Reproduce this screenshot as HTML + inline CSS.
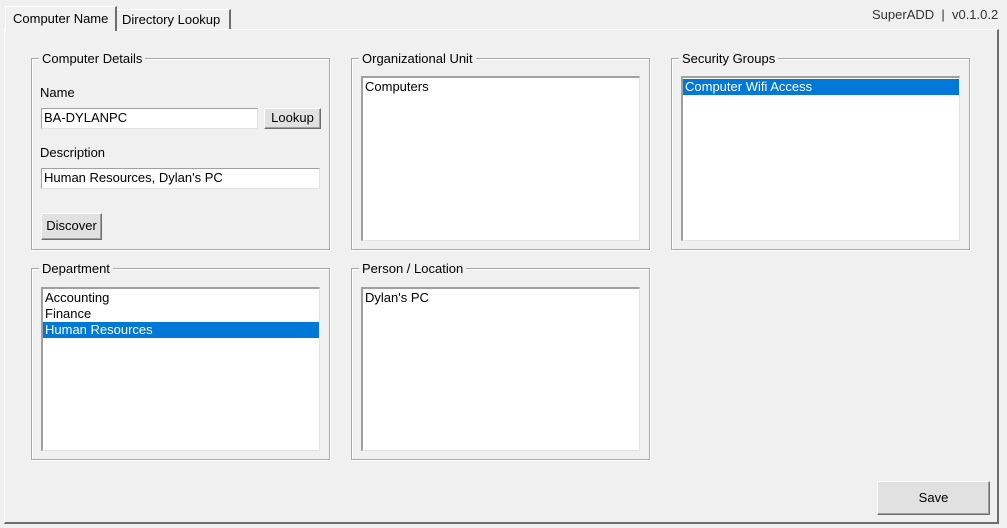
<!DOCTYPE html>
<html><head><style>
body{margin:0;width:1007px;height:528px;background:#f0f0f0;font-family:"Liberation Sans",sans-serif;font-size:13px;color:#000;position:relative;overflow:hidden}
.a{position:absolute;box-sizing:border-box}
.grp{border:1px solid #a8a8a8;box-shadow:inset 1px 1px 0 #fff,1px 1px 0 #fff}
.lg{position:absolute;top:-8px;left:7px;background:#f0f0f0;padding:0 3px;white-space:nowrap}
.list{background:#fff;border-top:2px solid #a0a0a0;border-left:2px solid #a0a0a0;border-right:1px solid #e3e3e3;border-bottom:1px solid #e3e3e3}
.it{height:16px;line-height:16px;padding-left:2px;white-space:nowrap}
.sel{background:#0078d7;color:#fff}
.tb{background:#fff;border:1px solid #a0a0a0;border-right-color:#e3e3e3;border-bottom-color:#e3e3e3;line-height:17px;padding-left:2px}
.btn{background:#e1e1e1;border:1px solid #fff;border-right:1px solid #6d6d6d;border-bottom:1px solid #6d6d6d;box-shadow:inset -1px -1px 0 #a0a0a0;text-align:center}
</style></head><body>
<div class="a" style="left:4px;top:29px;width:995px;height:495px;border-top:1px solid #fff;border-left:1px solid #fff;border-right:2px solid #6d6d6d;border-bottom:2px solid #6d6d6d"></div>
<div class="a" style="left:5px;top:6px;width:112px;height:25px;background:#f0f0f0;border-top:1px solid #fff;border-left:1px solid #fff;border-right:2px solid #6d6d6d;padding:4px 0 0 7px">Computer Name</div>
<div class="a" style="left:117px;top:9px;width:114px;height:20px;border-top:1px solid #fff;border-right:2px solid #6d6d6d;padding:2px 0 0 5px">Directory Lookup</div>
<div class="a" style="left:872px;top:7px;color:#333">SuperADD&nbsp; |&nbsp; v0.1.0.2</div>

<div class="a grp" style="left:31px;top:58px;width:299px;height:192px"><span class="lg">Computer Details</span></div>
<div class="a" style="left:40px;top:85px">Name</div>
<div class="a tb" style="left:41px;top:108px;width:217px;height:21px">BA-DYLANPC</div>
<div class="a btn" style="left:264px;top:108px;width:57px;height:21px;line-height:18px">Lookup</div>
<div class="a" style="left:40px;top:145px">Description</div>
<div class="a tb" style="left:41px;top:168px;width:279px;height:21px">Human Resources, Dylan's PC</div>
<div class="a btn" style="left:41px;top:213px;width:61px;height:27px;line-height:24px">Discover</div>

<div class="a grp" style="left:351px;top:58px;width:299px;height:192px"><span class="lg">Organizational Unit</span></div>
<div class="a list" style="left:361px;top:76px;width:279px;height:165px;padding-top:1px"><div class="it">Computers</div></div>

<div class="a grp" style="left:671px;top:58px;width:299px;height:192px"><span class="lg">Security Groups</span></div>
<div class="a list" style="left:681px;top:76px;width:279px;height:165px;padding-top:1px"><div class="it sel">Computer Wifi Access</div></div>

<div class="a grp" style="left:31px;top:268px;width:299px;height:192px"><span class="lg">Department</span></div>
<div class="a list" style="left:41px;top:287px;width:279px;height:164px;padding-top:1px"><div class="it">Accounting</div><div class="it">Finance</div><div class="it sel">Human Resources</div></div>

<div class="a grp" style="left:351px;top:268px;width:299px;height:192px"><span class="lg">Person / Location</span></div>
<div class="a list" style="left:361px;top:287px;width:279px;height:164px;padding-top:1px"><div class="it">Dylan's PC</div></div>

<div class="a btn" style="left:877px;top:481px;width:113px;height:34px;line-height:31px">Save</div>
</body></html>
